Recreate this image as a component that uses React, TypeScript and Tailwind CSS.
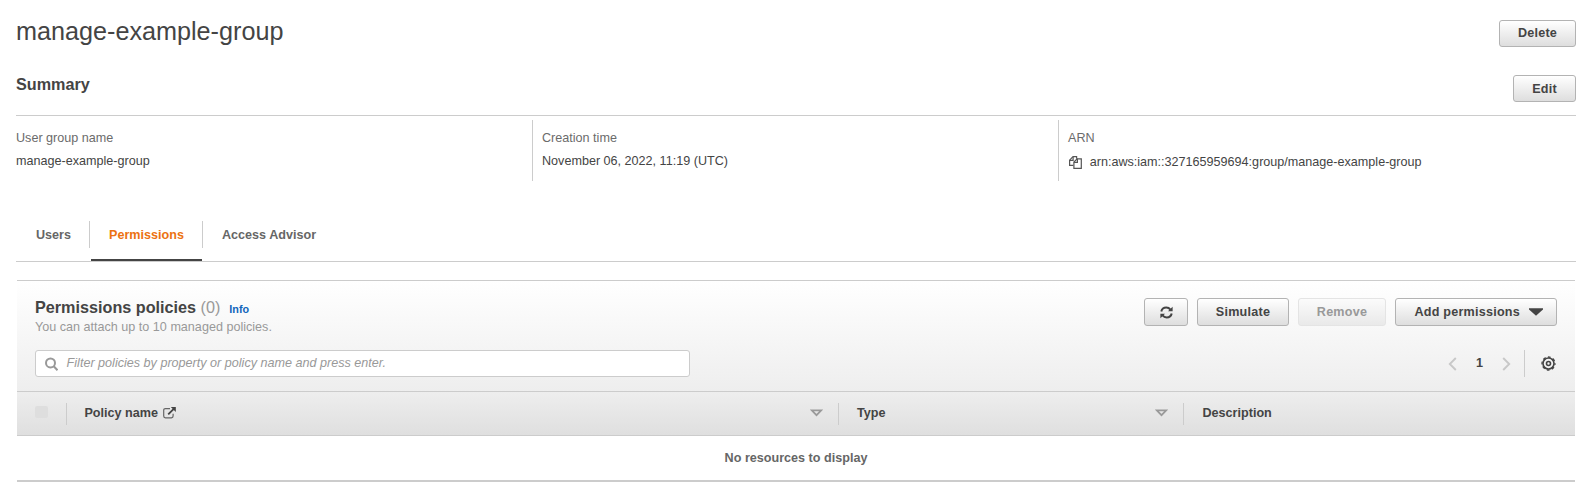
import React from "react";

type ButtonProps = { children: React.ReactNode; disabled?: boolean; className: string };

function Button({ children, disabled, className }: ButtonProps) {
  const tone = disabled
    ? "border-[#e4e4e4] text-[#999] from-[#fbfbfb] to-[#e9e9e9]"
    : "border-[#b3b3b3] text-[#444] from-white to-[#dedede]";
  return (
    <button
      disabled={disabled}
      className={`flex shrink-0 items-center justify-center rounded-[3px] border bg-linear-to-b text-[12.6px] leading-[18px] font-bold tracking-[0.225px] whitespace-nowrap ${tone} ${className}`}
    >
      {children}
    </button>
  );
}

function CopyIcon() {
  return (
    <svg width="13" height="13" viewBox="0 0 13 13" fill="none" stroke="#555" strokeWidth="1.2">
      <path d="M4.4 9.4H.6V4.2L4 .7h3.6v2" />
      <path d="M4.1.9v3.4H.7" />
      <path d="M4.9 12.3V6.1l3.3-3.3h4.1v9.5H4.9z" />
      <path d="M8.4 2.8v3.5H4.9" />
    </svg>
  );
}

function RefreshIcon() {
  return (
    <svg width="13" height="13" viewBox="0 0 13 13" fill="none" stroke="#444" strokeWidth="2">
      <path d="M1.3 5.5C1.8 3.1 3.8 1.6 6.3 1.6c1.7 0 3.1.7 4.2 2" />
      <path d="M11.7 7.5c-.5 2.4-2.5 3.9-5 3.9-1.7 0-3.1-.7-4.2-2" />
      <path d="M12.6.8v4.5H8z" fill="#444" stroke="none" />
      <path d="M.4 12.2V7.7H5z" fill="#444" stroke="none" />
    </svg>
  );
}

function SearchIcon() {
  return (
    <svg width="13" height="14" viewBox="0 0 13 14" fill="none" stroke="#999" strokeWidth="2">
      <circle cx="5.5" cy="5.9" r="4.5" />
      <path d="m8.7 9.2 3.8 4" />
    </svg>
  );
}

function ExternalIcon() {
  return (
    <svg width="13" height="12" viewBox="0 0 13 12" fill="none" stroke="#444">
      <path d="M7 1.6H2.4C1.3 1.6.7 2.2.7 3.3v5.8c0 1.1.6 1.7 1.7 1.7h6c1.1 0 1.7-.6 1.7-1.7V6.7" stroke="#666" strokeWidth="1.2" />
      <path d="m5.2 7.4 5.6-5.6" strokeWidth="1.8" />
      <path d="M7.8 0h5v5z" fill="#444" stroke="none" />
    </svg>
  );
}

function SortIcon() {
  return (
    <svg width="13" height="8" viewBox="0 0 13 8" fill="none" stroke="#999" strokeWidth="1.7">
      <path d="M1.8 1.3h9.4L6.5 6.2z" />
    </svg>
  );
}

function GearIcon() {
  return (
    <svg width="15" height="15" viewBox="0 0 15 15" fill="none" stroke="#444">
      <circle cx="7.5" cy="7.5" r="5.5" strokeWidth="1.6" />
      <circle cx="7.5" cy="7.5" r="6.5" strokeWidth="1.3" strokeDasharray="2.8 2.305" strokeDashoffset="1.4" />
      <circle cx="7.5" cy="7.5" r="2" strokeWidth="1.6" />
    </svg>
  );
}

function Chevron({ d }: { d: string }) {
  return (
    <svg width="9" height="14" viewBox="0 0 9 14" fill="none" stroke="#c8c8c8" strokeWidth="1.9">
      <path d={d} />
    </svg>
  );
}

export default function App() {
  return (
    <div className="h-[497px] w-[1594px] overflow-hidden bg-white pr-[18px] pl-4 font-['Liberation_Sans',Arial,sans-serif] text-[12.6px] leading-[18px] text-[#444]">
      <header className="flex h-[75px] items-start justify-between pt-5">
        <h1 className="-mt-[5px] text-[25.2px] leading-8">manage-example-group</h1>
        <Button className="h-[27px] w-[77px] pb-0.5">Delete</Button>
      </header>

      <section>
        <div className="flex h-[41px] items-start justify-between border-b border-[#ccc]">
          <h2 className="-mt-px text-[16.2px] leading-5 font-bold">Summary</h2>
          <Button className="h-[27px] w-[63px]">Edit</Button>
        </div>
        <div className="mt-1 flex h-[61px]">
          <div className="w-[516px] pt-[9px]">
            <div className="text-[#6b6b6b]">User group name</div>
            <div className="mt-[5px]">manage-example-group</div>
          </div>
          <div className="w-[526px] border-l border-[#ccc] pt-[9px] pl-[9px]">
            <div className="text-[#6b6b6b]">Creation time</div>
            <div className="mt-[5px]">November 06, 2022, 11:19 (UTC)</div>
          </div>
          <div className="flex-1 border-l border-[#ccc] pt-[9px] pl-[9px]">
            <div className="text-[#6b6b6b]">ARN</div>
            <div className="mt-[6px] flex items-center gap-[7.7px] pl-[1px]">
              <CopyIcon />
              <span>arn:aws:iam::327165959694:group/manage-example-group</span>
            </div>
          </div>
        </div>
      </section>

      <nav className="mt-10 flex h-[41px] border-b border-[#ccc] font-bold text-[#666]">
        <div className="h-[27px] w-[74px] border-r border-[#ccc] pt-[5px] pl-5">Users</div>
        <div className="ml-px flex h-10 w-[111px] flex-col border-b-2 border-[#444] pt-[5px] pl-[18px] text-[#ec7211]">
          Permissions
        </div>
        <div className="h-[27px] border-l border-[#ccc] pt-[5px] pl-[19px]">Access Advisor</div>
      </nav>

      <section className="mt-[18px] mr-px ml-px border-b-2 border-[#ccc]">
        <div className="h-[112px] border-y border-[#ccc] bg-linear-to-b from-white to-[#eee] pr-[18px] pl-[18px]">
          <div className="flex h-[69px] justify-between pt-[17px]">
            <div className="-mt-px">
              <div className="flex h-[21px] items-baseline leading-5">
                <h2 className="text-[16.2px] font-bold">Permissions policies</h2>
                <span className="ml-[4.5px] text-[16.2px] text-[#999]">(0)</span>
                <a className="ml-[9px] text-[10.8px] font-bold text-[#1166bb]">Info</a>
              </div>
              <p className="text-[#999]">You can attach up to 10 managed policies.</p>
            </div>
            <div className="flex gap-[9px]">
              <Button className="h-7 w-11"><RefreshIcon /></Button>
              <Button className="h-7 w-[92px]">Simulate</Button>
              <Button disabled className="h-7 w-[88px]">Remove</Button>
              <Button className="h-7 w-[162px] gap-[8.5px] pl-[5px]">
                Add permissions
                <svg width="14" height="8" viewBox="0 0 14 8" fill="#444"><path d="M0 .3h14v1.3L7 7.7 0 1.6z" /></svg>
              </Button>
            </div>
          </div>
          <div className="flex items-center justify-between">
            <div className="flex h-[27px] w-[655px] items-center gap-[8.6px] rounded-[3px] border border-[#ccc] bg-white pl-[9px]">
              <span className="pt-px"><SearchIcon /></span>
              <span className="pb-px text-[#999] italic">Filter policies by property or policy name and press enter.</span>
            </div>
            <div className="flex h-[27px] items-center">
              <Chevron d="M7.8 1 1.8 7l6 6" />
              <span className="w-[45px] pb-px text-center font-bold">1</span>
              <Chevron d="m1.2 1 6 6-6 6" />
              <div className="ml-[13px] h-[27px] w-px bg-[#ccc]" />
              <div className="mr-[1.5px] ml-[15.5px]"><GearIcon /></div>
            </div>
          </div>
        </div>

        <div className="flex h-11 items-center border-b border-[#ccc] bg-linear-to-b from-[#eee] to-[#dfdfdf] pl-[18px] font-bold">
          <div className="mb-[3px] h-3 w-[13px] rounded-[2px] bg-[#dedede]" />
          <div className="ml-[18px] flex h-[22px] w-[772px] items-center border-l border-[#ccc] pb-0.5 pl-[17.4px]">
            Policy name
            <span className="ml-[5.5px] pt-px"><ExternalIcon /></span>
            <span className="mr-[15.5px] ml-auto"><SortIcon /></span>
          </div>
          <div className="flex h-[22px] w-[345px] items-center border-l border-[#ccc] pb-0.5 pl-[18px]">
            Type
            <span className="mr-[15px] ml-auto"><SortIcon /></span>
          </div>
          <div className="flex h-[22px] flex-1 items-center border-l border-[#ccc] pb-0.5 pl-[18.5px]">Description</div>
        </div>
        <div className="flex h-11 items-center justify-center font-bold text-[#666]">No resources to display</div>
      </section>
    </div>
  );
}
